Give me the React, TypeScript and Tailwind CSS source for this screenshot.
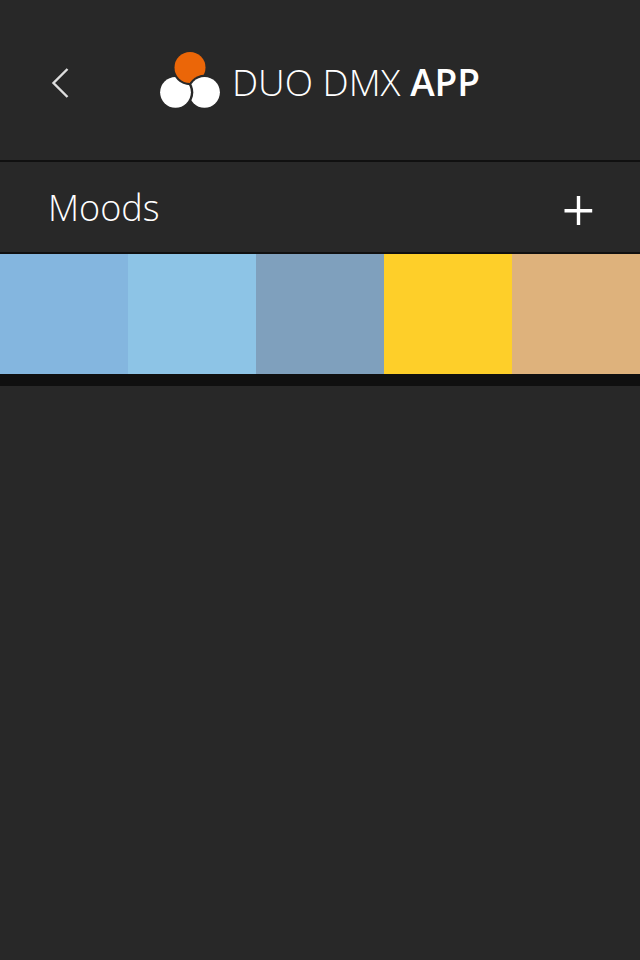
const moods = [
    { name: "Sky", color: "bg-[#84b6df]" },
    { name: "Ice", color: "bg-[#8dc4e6]" },
    { name: "Steel", color: "bg-[#7fa0bd]" },
    { name: "Sun", color: "bg-[#fecf29]" },
    { name: "Sand", color: "bg-[#deb27c]" },
];

function LogoMark() {
    return (
        <svg
            viewBox="0 0 60 56"
            className="h-14 w-[60px] shrink-0"
            aria-hidden="true"
        >
            <defs>
                <clipPath id="orange-front">
                    <rect x="10" y="0" width="20" height="40" />
                </clipPath>
            </defs>
            {/* Each circle overlaps the next one, all the way round */}
            <circle cx="30" cy="15.5" r="15.5" fill="#eb6608" />
            <circle cx="44.5" cy="40.3" r="17.5" fill="#282828" />
            <circle cx="44.5" cy="40.3" r="15.4" fill="#fff" />
            <circle cx="15.5" cy="40.3" r="17.8" fill="#282828" />
            <circle cx="15.5" cy="40.3" r="15.4" fill="#fff" />
            <g clipPath="url(#orange-front)">
                <circle cx="30" cy="15.5" r="17.7" fill="#282828" />
                <circle cx="30" cy="15.5" r="15.5" fill="#eb6608" />
            </g>
        </svg>
    );
}

function Header() {
    return (
        <header className="grid h-40 grid-cols-[1fr_auto_1fr] items-center">
            <button
                type="button"
                aria-label="Back"
                className="mt-1 ml-11 flex size-8 items-center justify-center"
            >
                <svg viewBox="0 0 32 32" className="size-8" fill="none">
                    <path
                        d="M23.5 3 9.5 17 23.5 31"
                        stroke="#dedede"
                        strokeWidth="2.4"
                    />
                </svg>
            </button>
            <h1 className="flex items-center gap-3 font-['Open_Sans',sans-serif] text-[37px] leading-none font-light text-white">
                <LogoMark />
                <span className="pt-0.5 whitespace-nowrap">
                    DUO DMX <span className="font-semibold">APP</span>
                </span>
            </h1>
        </header>
    );
}

export default function App() {
    return (
        <div className="min-h-screen bg-[#282828] text-white">
            <Header />
            <main>
                <div className="flex h-[94px] items-center justify-between border-y-2 border-[#101010] pr-[46px] pl-12">
                    <h2 className="pt-0.5 font-['Open_Sans',sans-serif] text-[36px] leading-none font-light">
                        Moods
                    </h2>
                    <button
                        type="button"
                        aria-label="Add mood"
                        className="mt-1 flex size-8 items-center justify-center"
                    >
                        <svg viewBox="0 0 32 32" className="size-8" fill="none">
                            <path
                                d="M16.5 3v29M2.5 17.7h27.7"
                                stroke="#fff"
                                strokeWidth="3.4"
                            />
                        </svg>
                    </button>
                </div>
                <div className="flex h-[132px] border-b-12 border-[#101010]">
                    {moods.map((mood) => (
                        <button
                            key={mood.name}
                            type="button"
                            aria-label={mood.name}
                            className={`flex-1 ${mood.color}`}
                        />
                    ))}
                </div>
            </main>
        </div>
    );
}
